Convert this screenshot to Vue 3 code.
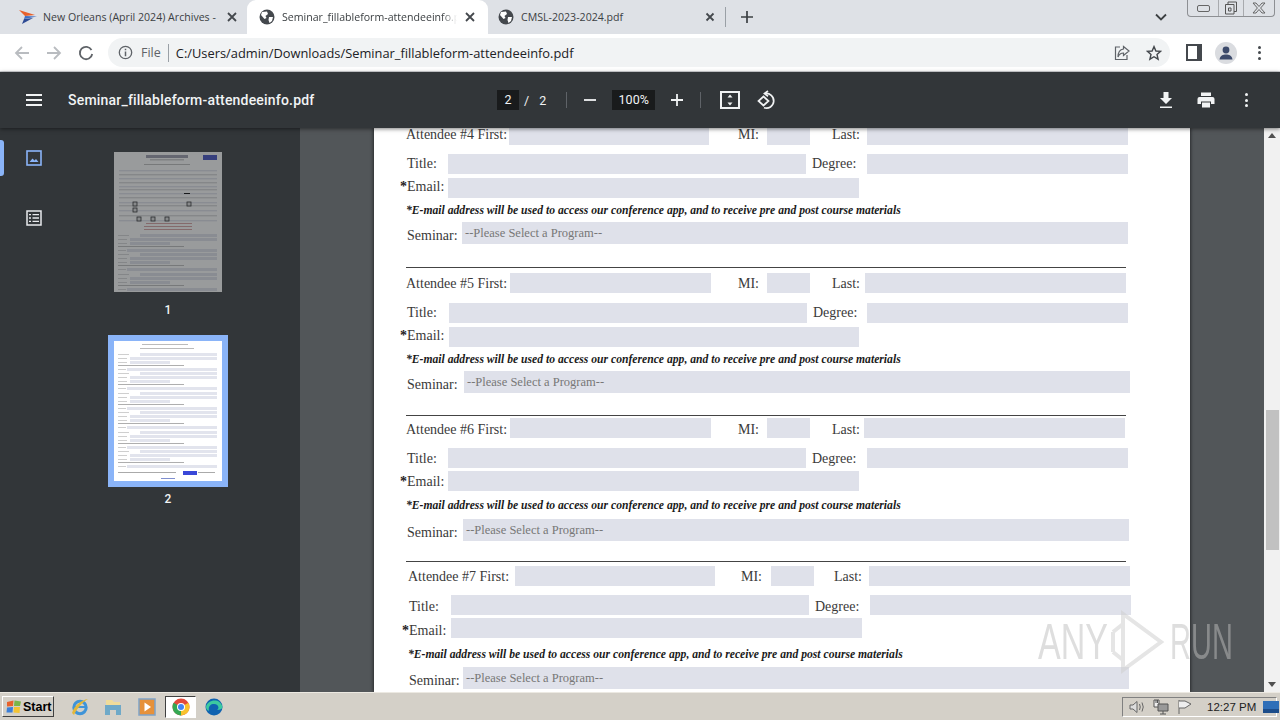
<template>
  <div class="screen">
    <div class="tabstrip">
      <div class="tab first">
        <svg class="fav" viewBox="0 0 18 16" width="18" height="16">
          <path d="M0 1 L16 6 L6 7 Z" fill="#e8612c" />
          <path d="M6 7 L18 7.5 L5 10 Z" fill="#3f6fc4" />
          <path d="M5 10 L14 9 L3 15 Z" fill="#2d4a94" />
        </svg>
        <span class="tab-title">New Orleans (April 2024) Archives -</span>
        <svg class="tab-x" viewBox="0 0 10 10" width="10" height="10"><path d="M1 1 L9 9 M9 1 L1 9" /></svg>
      </div>
      <div class="tab active">
        <svg class="fav globe" viewBox="0 0 16 16" width="16" height="16">
          <circle cx="8" cy="8" r="7.5" fill="#44484d" />
          <path d="M3 3 L8 2.5 L9 5 L6.5 7 L7.5 9 L5.5 10 L2 6 Z M10 8 L14 8 L13 12 L10.5 14 L9.5 11 Z" fill="#fff" />
        </svg>
        <span class="tab-title">Seminar_fillableform-attendeeinfo.pdf</span>
        <svg class="tab-x" viewBox="0 0 10 10" width="10" height="10"><path d="M1 1 L9 9 M9 1 L1 9" /></svg>
      </div>
      <div class="tab third">
        <svg class="fav globe" viewBox="0 0 16 16" width="16" height="16">
          <circle cx="8" cy="8" r="7.5" fill="#44484d" />
          <path d="M3 3 L8 2.5 L9 5 L6.5 7 L7.5 9 L5.5 10 L2 6 Z M10 8 L14 8 L13 12 L10.5 14 L9.5 11 Z" fill="#fff" />
        </svg>
        <span class="tab-title">CMSL-2023-2024.pdf</span>
        <svg class="tab-x" viewBox="0 0 10 10" width="10" height="10"><path d="M1.5 1.5 L8.5 8.5 M8.5 1.5 L1.5 8.5" /></svg>
      </div>
      <span class="tab-sep"></span>
      <svg class="plus" viewBox="0 0 14 14" width="14" height="14"><path d="M7 1 V13 M1 7 H13" /></svg>
      <svg class="chev" viewBox="0 0 12 8" width="12" height="8"><path d="M1 1.5 L6 6.5 L11 1.5" /></svg>
      <div class="winbtns">
        <span class="winbtn"><i class="win-min"></i></span>
        <span class="winbtn mid">
          <svg viewBox="0 0 14 14" width="14" height="14"><path d="M4 3.5 V1 H12.5 V10.5 H10 M1.5 3.5 H10 V13 H1.5 Z M4.5 7 H7 V10 H4.5 Z" fill="none" stroke="#555" /></svg>
        </span>
        <span class="winbtn">
          <svg viewBox="0 0 14 12" width="14" height="12"><path d="M1 1 H4 L7 4.5 L10 1 H13 L8.6 6 L13 11 H10 L7 7.5 L4 11 H1 L5.4 6 Z" fill="none" stroke="#666" /></svg>
        </span>
      </div>
    </div>

    <div class="toolbar">
      <svg class="nav-ic" viewBox="0 0 16 16" width="16" height="16"><path d="M15 8 H2 M8 2 L2 8 L8 14" stroke="#b9bcc0" /></svg>
      <svg class="nav-ic" viewBox="0 0 16 16" width="16" height="16"><path d="M1 8 H14 M8 2 L14 8 L8 14" stroke="#b9bcc0" /></svg>
      <svg class="nav-ic" viewBox="0 0 16 16" width="16" height="16"><path d="M13.5 5 A6.2 6.2 0 1 0 14.2 9" stroke="#5f6368" /><path d="M14.5 1.5 V6 H10 Z" fill="#5f6368" stroke="none" /></svg>
      <div class="omnibox">
        <svg class="info" viewBox="0 0 16 16" width="15" height="15">
          <circle cx="8" cy="8" r="6.6" fill="none" stroke="#5f6368" stroke-width="1.4" />
          <path d="M8 7 V12 M8 4 V5.6" stroke="#5f6368" stroke-width="1.6" />
        </svg>
        <span class="file-label">File</span>
        <span class="omni-sep"></span>
        <span class="url">C:/Users/admin/Downloads/Seminar_fillableform-attendeeinfo.pdf</span>
        <svg class="share" viewBox="0 0 16 16" width="16" height="16" fill="none" stroke="#5f6368" stroke-width="1.2">
          <path d="M6 2 H1.5 V14.5 H13 V10" />
          <path d="M9.5 1.5 L15 6 L9.5 10.5 V8 C6.5 8 5 9.5 4 12 C4 7.5 6 4.5 9.5 4 Z" />
        </svg>
        <svg class="star" viewBox="0 0 16 16" width="16" height="16">
          <path d="M8 1.6 L9.9 6 L14.6 6.4 L11 9.5 L12.1 14.2 L8 11.7 L3.9 14.2 L5 9.5 L1.4 6.4 L6.1 6 Z" fill="none" stroke="#44484d" stroke-width="1.4" />
        </svg>
      </div>
      <div class="side-ic"></div>
      <div class="avatar">
        <svg viewBox="0 0 22 22" width="22" height="22">
          <circle cx="11" cy="8" r="3.4" fill="#3c4a6b" />
          <path d="M4.5 17.5 C5 13.5 8 12.5 11 12.5 C14 12.5 17 13.5 17.5 17.5 Z" fill="#3c4a6b" />
        </svg>
      </div>
      <div class="chrome-dots"><i></i><i></i><i></i></div>
    </div>

    <div class="pdfbar">
      <div class="burger"><i></i><i></i><i></i></div>
      <span class="pdf-title">Seminar_fillableform-attendeeinfo.pdf</span>
      <span class="page-box">2</span>
      <span class="page-of">/</span>
      <span class="page-total">2</span>
      <span class="bar-sep sep-a"></span>
      <svg class="zoom-minus" viewBox="0 0 14 14" width="14" height="14"><path d="M1 7 H13" /></svg>
      <span class="zoom-box">100%</span>
      <svg class="zoom-plus" viewBox="0 0 14 14" width="14" height="14"><path d="M1 7 H13 M7 1 V13" /></svg>
      <span class="bar-sep sep-b"></span>
      <svg class="fit" viewBox="0 0 20 18" width="20" height="18" fill="none" stroke="#f1f3f4">
        <rect x="1" y="1" width="18" height="16" stroke-width="2" />
        <path d="M10 3.5 L12.5 6.5 H7.5 Z M10 14.5 L12.5 11.5 H7.5 Z" fill="#f1f3f4" stroke="none" />
      </svg>
      <svg class="rotate" viewBox="0 0 20 20" width="20" height="20" fill="none" stroke="#f1f3f4" stroke-width="1.7">
        <path d="M9 3.5 A7.4 7.4 0 1 1 8 17.8" />
        <path d="M12 1 L8.5 3.6 L12 6.2" />
        <path d="M7.5 6.5 L12.5 11 L7.5 15.5 L2.5 11 Z" />
      </svg>
      <svg class="download" viewBox="0 0 14 18" width="14" height="18">
        <path d="M4.5 1 H9.5 V7 H13 L7 13 L1 7 H4.5 Z M1 15.5 H13 V17 H1 Z" fill="#f1f3f4" />
      </svg>
      <svg class="print" viewBox="0 0 18 16" width="18" height="16">
        <path d="M4 0.5 H14 V4 H4 Z M2.5 5 H15.5 A2 2 0 0 1 17.5 7 V12 H14 V9.5 H4 V12 H0.5 V7 A2 2 0 0 1 2.5 5 Z M5 10.5 H13 V15.5 H5 Z" fill="#f1f3f4" />
      </svg>
      <div class="pdf-dots"><i></i><i></i><i></i></div>
    </div>

    <div class="workspace">
      <aside class="sidebar">
        <div class="side-tools">
          <div class="side-btn current">
            <svg viewBox="0 0 16 16" width="16" height="16">
              <rect x="1" y="1" width="14" height="14" fill="none" stroke="#8ab4f8" stroke-width="1.6" />
              <path d="M3.5 12 L6.5 8.5 L8.5 10.5 L10 9 L12.5 12 Z" fill="#8ab4f8" />
            </svg>
          </div>
          <div class="side-btn">
            <svg viewBox="0 0 16 16" width="16" height="16" fill="none" stroke="#e8eaed">
              <rect x="1" y="1" width="14" height="14" stroke-width="1.5" />
              <path d="M6.5 4.6 H13 M6.5 8 H13 M6.5 11.4 H13 M3 4.6 H5 M3 8 H5 M3 11.4 H5" stroke-width="1.3" />
            </svg>
          </div>
        </div>
        <div class="thumbs">
          <div class="thumb-frame">
            <svg class="thumb dim" viewBox="0 0 108 140" width="108" height="140">
              <rect width="108" height="140" fill="#fff" />
              <rect x="32" y="3" width="42" height="3" fill="#99a" />
              <rect x="36" y="7" width="34" height="1.5" fill="#ccc" />
              <rect x="89" y="3" width="14" height="5" fill="#3a48c0" />
              <rect x="30" y="12" width="46" height="1" fill="#bbb" />
              <rect v-for="r in coverBars" :key="r.key" :x="r.x" :y="r.y" :width="r.w" :height="r.h" :fill="r.fill" />
              <rect v-for="b in coverBoxes" :key="b[0] + '-' + b[1]" :x="b[0]" :y="b[1]" width="4" height="4" fill="#ddd" stroke="#222" stroke-width="0.8" />
            </svg>
          </div>
          <span class="thumb-num num-one">1</span>
          <div class="thumb-frame selected">
            <svg class="thumb" viewBox="0 0 108 140" width="108" height="140">
              <rect width="108" height="140" fill="#fff" />
              <rect x="28" y="3" width="46" height="1" fill="#bbb" />
              <rect x="26" y="7" width="54" height="1" fill="#bbb" />
              <rect v-for="r in listBars" :key="r.key" :x="r.x" :y="r.y" :width="r.w" :height="r.h" :fill="r.fill" />
              <rect x="4" y="131" width="58" height="1" fill="#aaa" />
              <rect x="69" y="130" width="14" height="4" fill="#3a48d8" />
              <rect x="84" y="131" width="17" height="1" fill="#aaa" />
              <rect x="47" y="137" width="14" height="1" fill="#7f8fd0" />
            </svg>
          </div>
          <span class="thumb-num num-two">2</span>
        </div>
      </aside>

      <main class="viewer">
        <article class="page">
          <section
            v-for="person in attendees"
            :key="person.no"
            class="attendee"
            :style="{ marginTop: person.top + 'px', marginLeft: person.dx + 'px' }"
          >
            <div class="row first-row" :style="{ marginTop: person.gaps[0] + 'px', '--shift': person.shift[0] + 'px' }">
              <span class="label" :style="{ width: person.firstLabel + 'px' }">Attendee #{{ person.no }} First:</span>
              <span class="field" :style="{ width: person.first + 'px' }"></span>
              <span class="label" :style="{ width: person.miLabel + 'px', marginLeft: person.miGap + 'px' }">MI:</span>
              <span class="field" :style="{ width: '43px' }"></span>
              <span class="label" :style="{ width: person.lastLabel + 'px', marginLeft: person.lastGap + 'px' }">Last:</span>
              <span class="field" :style="{ width: person.last + 'px' }"></span>
            </div>
            <div class="row" :style="{ marginTop: person.gaps[1] + 'px', '--shift': person.shift[1] + 'px' }">
              <span class="label inset" :style="{ width: person.titleLabel + 'px' }">Title:</span>
              <span class="field" :style="{ width: '358px' }"></span>
              <span class="label degree" :style="{ width: person.degree + 'px' }">Degree:</span>
              <span class="field" :style="{ width: '261px' }"></span>
            </div>
            <div class="row" :style="{ marginTop: person.gaps[2] + 'px', '--shift': person.shift[2] + 'px' }">
              <span class="label email" :style="{ width: person.titleLabel + 'px' }"><b class="req">*</b>Email:</span>
              <span class="field" :style="{ width: person.emailField + 'px' }"></span>
            </div>
            <p class="note" :style="{ marginTop: person.gaps[3] + 'px' }">*E-mail address will be used to access our conference app, and to receive pre and post course materials</p>
            <div class="row seminar" :style="{ marginTop: person.gaps[4] + 'px', '--shift': '3px' }">
              <span class="label inset" :style="{ width: person.semLabel + 'px' }">Seminar:</span>
              <span class="field select" :style="{ width: '666px' }">--Please Select a Program--</span>
            </div>
            <hr v-if="person.rule" class="rule" :style="{ marginTop: person.rule + 'px' }" />
          </section>
        </article>
      </main>

      <div class="scrollbar">
        <span class="arrow up"></span>
        <span class="thumb-bar"></span>
        <span class="arrow down"></span>
      </div>

      <div class="watermark">
        <span class="wm-any">ANY</span>
        <svg viewBox="0 0 56 64" width="56" height="64" fill="none" stroke="#d0d0d0" stroke-width="4" opacity="0.55">
          <path d="M4 22 V42 M14 4 V60 L52 32 Z" />
          <path d="M4 22 L14 14 M4 42 L14 50" />
        </svg>
        <span class="wm-run">RUN</span>
      </div>
    </div>

    <footer class="taskbar">
      <div class="start">
        <svg viewBox="0 0 16 16" width="16" height="16">
          <path d="M1 3 L7.5 1.5 L7 7 L1 7.6 Z" fill="#e8622c" />
          <path d="M8.5 1.5 L15 2.5 L14 7 L8 7 Z" fill="#7ab648" />
          <path d="M1 8.6 L7 8 L6.5 13.5 L0.5 13.5 Z" fill="#3c7fd8" />
          <path d="M8 8 L14 8 L13.5 14 L7.5 13.5 Z" fill="#f3c331" />
        </svg>
        <span>Start</span>
      </div>
      <div class="quick">
        <svg class="q-ie" viewBox="0 0 20 20" width="20" height="20">
          <circle cx="10" cy="10.5" r="6.2" fill="none" stroke="#3f94d8" stroke-width="3" />
          <path d="M5 10 H16" stroke="#3f94d8" stroke-width="2" />
          <path d="M2 16 C4 9 11 3 18 2 C13 5 7 11 4 18 Z" fill="#e3b83a" />
        </svg>
        <svg class="q-folder" viewBox="0 0 20 20" width="20" height="20">
          <path d="M3 3 H9 L11 5 H17 V9 H3 Z" fill="#f0dc9a" />
          <path d="M2 8 H18 V18 H13 V13 H7 V18 H2 Z" fill="#6fa9c8" />
        </svg>
        <svg class="q-media" viewBox="0 0 18 18" width="18" height="18">
          <rect x="1" y="1" width="16" height="16" fill="#e6913a" stroke="#7ea2c8" stroke-width="1.5" />
          <path d="M6.5 4.5 L13 9 L6.5 13.5 Z" fill="#fff" />
        </svg>
        <div class="q-chrome">
          <svg viewBox="0 0 18 18" width="18" height="18">
            <circle cx="9" cy="9" r="8.5" fill="#e24a3b" />
            <path d="M9 9 L16.4 4.8 A8.5 8.5 0 0 1 9 17.5 Z" fill="#f8c22d" />
            <path d="M9 9 L9 17.5 A8.5 8.5 0 0 1 1.6 4.8 Z" fill="#34a853" />
            <circle cx="9" cy="9" r="4" fill="#fff" />
            <circle cx="9" cy="9" r="3" fill="#4285f4" />
          </svg>
        </div>
        <svg class="q-edge" viewBox="0 0 18 18" width="18" height="18">
          <circle cx="9" cy="9" r="8.5" fill="#0f62b0" />
          <path d="M1 9 C2 2 15 -1 17.5 9 C17.5 11 15 12 12 12 C15 10 13 6 9 6 C5 6 3 9 4 13 C2 12 1 11 1 9 Z" fill="#3cc9a0" />
        </svg>
      </div>
      <div class="tray">
        <svg viewBox="0 0 18 16" width="18" height="16" fill="none" stroke="#666">
          <path d="M2 6 H5 L9 2.5 V13.5 L5 10 H2 Z" fill="#ddd" />
          <path d="M11.5 5 Q13 8 11.5 11 M14 3.5 Q16.5 8 14 12.5" />
        </svg>
        <svg viewBox="0 0 18 16" width="18" height="16" fill="none" stroke="#555">
          <path d="M2 1 H7 V8 H2 Z M4 1 V4 M5.5 1 V4" fill="#eee" />
          <path d="M6 5 H16 V12 H6 Z M8 15 H14 M11 12 V15" fill="#999" />
        </svg>
        <svg viewBox="0 0 18 16" width="18" height="16" fill="none" stroke="#666">
          <path d="M3 1 V15" />
          <path d="M3 2 H9 L15 5 L9 9 H3" fill="#eee" />
        </svg>
        <span class="clock">12:27 PM</span>
        <svg class="desk" viewBox="0 0 16 12" width="16" height="12">
          <rect width="16" height="12" fill="#2f6fb8" />
          <rect y="8" width="16" height="4" fill="#1d4d8a" />
        </svg>
      </div>
    </footer>
  </div>
</template>

<script setup>
const attendees = [
  { no: 4, top: -3, dx: 0, firstLabel: 103, first: 200, miLabel: 29, miGap: 29, lastLabel: 35, lastGap: 22, last: 261, titleLabel: 42, degree: 61, emailField: 411, semLabel: 56, shift: [0, 0, -1], gaps: [0, 9, 4, 6, 4], rule: 23 },
  { no: 5, top: 0, dx: 0, firstLabel: 104, first: 201, miLabel: 29, miGap: 27, lastLabel: 33, lastGap: 22, last: 261, titleLabel: 43, degree: 60, emailField: 410, semLabel: 58, shift: [1, 0, -1], gaps: [5, 10, 4, 6, 4], rule: 22 },
  { no: 6, top: 0, dx: 0, firstLabel: 104, first: 201, miLabel: 29, miGap: 27, lastLabel: 32, lastGap: 22, last: 261, titleLabel: 42, degree: 61, emailField: 411, semLabel: 57, shift: [2, 1, 1], gaps: [2, 10, 3, 8, 6], rule: 20 },
  { no: 7, top: 0, dx: 2, firstLabel: 107, first: 200, miLabel: 30, miGap: 26, lastLabel: 35, lastGap: 20, last: 261, titleLabel: 43, degree: 61, emailField: 411, semLabel: 55, shift: [1, 2, 3], gaps: [4, 9, 3, 10, 5], rule: 0 }
]

// bars for the two page previews in the sidebar
const makeGroups = (starts, fieldColor, textColor, noteColor) => {
  const bars = []
  starts.forEach((y, i) => {
    const rows = [
      [y, 4, 11, 26, 47],
      [y + 4, 4, 9, 16, 55],
      [y + 8, 4, 9, 16, 40]
    ]
    rows.forEach(([ry, lx, lw, fx, fw], j) => {
      bars.push({ key: `${i}-${j}-l`, x: lx, y: ry + 1, w: lw, h: 0.8, fill: textColor })
      bars.push({ key: `${i}-${j}-f`, x: fx, y: ry, w: fw, h: 3, fill: fieldColor })
    })
    bars.push({ key: `${i}-m`, x: 57, y, w: 7, h: 3, fill: fieldColor })
    bars.push({ key: `${i}-r`, x: 66, y, w: 37, h: 3, fill: fieldColor })
    bars.push({ key: `${i}-r2`, x: 66, y: y + 4, w: 37, h: 3, fill: fieldColor })
    bars.push({ key: `${i}-n`, x: 4, y: y + 12, w: 66, h: 0.8, fill: noteColor })
    bars.push({ key: `${i}-sl`, x: 4, y: y + 16, w: 8, h: 0.8, fill: textColor })
    bars.push({ key: `${i}-s`, x: 13, y: y + 15, w: 90, h: 3, fill: fieldColor })
  })
  return bars
}

const listBars = makeGroups([12, 31, 51, 70, 90, 109], '#e2e4ed', '#c4c4c4', '#9a9a9a')

const coverBars = [
  ...makeGroups([82, 101, 121], '#e0e2ea', '#ccc', '#aaa'),
  ...[18, 22, 26, 30, 34, 37, 41, 45, 50, 53, 58, 63, 68].map((y, i) => ({
    key: `c${i}`,
    x: 5,
    y,
    w: 98,
    h: 1.4,
    fill: i % 2 ? '#d8d8d8' : '#e0e2ea'
  })),
  { key: 'red1', x: 32, y: 71, w: 46, h: 0.8, fill: '#c88' },
  { key: 'red2', x: 30, y: 74, w: 48, h: 0.8, fill: '#c88' },
  { key: 'red3', x: 30, y: 77, w: 48, h: 0.8, fill: '#c88' },
  { key: 'blk', x: 70, y: 41, w: 6, h: 1, fill: '#000' }
]

const coverBoxes = [
  [19, 50],
  [73, 50],
  [19, 56],
  [23, 65],
  [37, 65],
  [51, 65]
]
</script>

<style scoped>
.screen {
  display: flex;
  flex-direction: column;
  width: 1280px;
  height: 720px;
  overflow: hidden;
  font-family: "Open Sans", "Liberation Sans", sans-serif;
  position: relative;
}

.tabstrip {
  display: flex;
  align-items: center;
  height: 34px;
  padding-left: 8px;
  background: #dee1e6;
  position: relative;
}

.tab {
  display: flex;
  align-items: center;
  flex: none;
  height: 34px;
  box-sizing: border-box;
  font-size: 10.6px;
  color: #3c4043;
}

.tab.first {
  width: 239px;
  padding-left: 11px;
}

.tab.active {
  width: 241px;
  padding-left: 12px;
  background: #fff;
  border-radius: 9px 9px 0 0;
}

.tab.third {
  width: 237px;
  padding-left: 10px;
}

.fav {
  flex: none;
  margin-right: 6px;
}

.globe {
  margin-right: 7px;
}

.tab-title {
  flex: none;
  white-space: nowrap;
  overflow: hidden;
}

.first .tab-title {
  width: 178px;
}

.active .tab-title {
  width: 175px;
  -webkit-mask-image: linear-gradient(to right, #000 160px, transparent 175px);
  mask-image: linear-gradient(to right, #000 160px, transparent 175px);
}

.third .tab-title {
  width: 182px;
}

.tab-x {
  flex: none;
  margin-left: 2px;
}

.first .tab-x {
  margin-left: 6px;
}

.active .tab-x {
  margin-left: 8px;
}

.tab-x path {
  fill: none;
  stroke: #44484d;
  stroke-width: 1.8;
}

.tab-sep {
  width: 1px;
  height: 20px;
  background: #9aa0a6;
}

.plus {
  margin-left: 14px;
}

.plus path {
  fill: none;
  stroke: #3c4043;
  stroke-width: 1.7;
}

.chev {
  margin-left: 401px;
}

.chev path {
  fill: none;
  stroke: #3c4043;
  stroke-width: 1.8;
}

.winbtns {
  display: flex;
  height: 16px;
  position: absolute;
  top: 0;
  right: 5px;
  border: 1px solid #8d8f93;
  border-top: 0;
  border-radius: 0 0 4px 4px;
}

.winbtn {
  display: flex;
  align-items: center;
  justify-content: center;
  width: 30px;
}

.winbtn.mid {
  width: 24px;
  border-left: 1px solid #a8aaae;
  border-right: 1px solid #a8aaae;
}

.win-min {
  display: block;
  width: 11px;
  height: 5px;
  border: 1px solid #666;
  border-radius: 2px;
}

.toolbar {
  display: flex;
  align-items: center;
  height: 38px;
  padding-left: 14px;
  background: #fff;
  border-bottom: 1px solid #d5d7da;
  box-sizing: border-box;
}

.nav-ic {
  flex: none;
  margin-right: 16px;
}

.nav-ic path {
  fill: none;
  stroke-width: 1.8;
}

.omnibox {
  display: flex;
  align-items: center;
  flex: none;
  width: 1062px;
  height: 29px;
  margin-left: -2px;
  padding-left: 10px;
  box-sizing: border-box;
  background: #f1f3f4;
  border-radius: 15px;
}

.file-label {
  margin-left: 8px;
  font-size: 12.5px;
  color: #5f6368;
}

.omni-sep {
  width: 1px;
  height: 18px;
  margin: 0 7px;
  background: #9aa0a6;
}

.url {
  flex: none;
  width: 938px;
  font-size: 12.85px;
  color: #202124;
  white-space: nowrap;
}

.share {
  flex: none;
}

.star {
  margin-left: 16px;
  flex: none;
}

.side-ic {
  flex: none;
  width: 9px;
  height: 13px;
  margin-left: 16px;
  border: 2px solid #44484d;
  border-right-width: 5px;
}

.avatar {
  display: flex;
  align-items: center;
  justify-content: center;
  flex: none;
  width: 22px;
  height: 22px;
  margin-left: 13px;
  background: #dadce0;
  border-radius: 50%;
}

.chrome-dots,
.pdf-dots {
  display: flex;
  flex-direction: column;
  gap: 2.5px;
  flex: none;
}

.chrome-dots {
  margin-left: 21px;
}

.chrome-dots i,
.pdf-dots i {
  display: block;
  width: 3px;
  height: 3px;
  border-radius: 50%;
  background: #44484d;
}

.pdfbar {
  display: flex;
  align-items: center;
  height: 56px;
  padding-left: 26px;
  background: #323639;
  color: #f1f3f4;
  box-shadow: 0 1px 4px rgba(0, 0, 0, 0.5);
  position: relative;
  z-index: 2;
}

.burger {
  display: flex;
  flex-direction: column;
  gap: 3px;
  width: 16px;
  flex: none;
}

.burger i {
  display: block;
  height: 2px;
  background: #f1f3f4;
}

.pdf-title {
  width: 429px;
  margin-left: 26px;
  font-family: Roboto, "Noto Sans", sans-serif;
  font-size: 14px;
  font-weight: 500;
  letter-spacing: 0.2px;
  white-space: nowrap;
}

.page-box {
  width: 22px;
  height: 20px;
  background: #191b1c;
  font: 12.5px/20px Roboto, sans-serif;
  text-align: center;
}

.page-of {
  margin-left: 5px;
  font: 12.5px Roboto, sans-serif;
}

.page-total {
  margin-left: 10px;
  font: 12.5px Roboto, sans-serif;
}

.bar-sep {
  width: 1px;
  height: 16px;
  background: #5f6368;
}

.sep-a {
  margin-left: 20px;
}

.zoom-minus {
  margin-left: 16px;
}

.zoom-minus path,
.zoom-plus path {
  fill: none;
  stroke: #f1f3f4;
  stroke-width: 1.8;
}

.zoom-box {
  width: 43px;
  height: 20px;
  margin-left: 15px;
  background: #191b1c;
  font: 12.5px/20px Roboto, sans-serif;
  text-align: center;
}

.zoom-plus {
  margin-left: 15px;
}

.sep-b {
  margin-left: 16px;
}

.fit {
  margin-left: 19px;
}

.rotate {
  margin-left: 16px;
}

.download {
  margin-left: 383px;
}

.print {
  margin-left: 24px;
}

.pdf-dots {
  margin-left: 30px;
}

.pdf-dots i {
  background: #f1f3f4;
}

.workspace {
  display: flex;
  height: 564px;
  position: relative;
}

.sidebar {
  display: flex;
  flex: none;
  width: 300px;
  background: #323639;
}

.side-tools {
  display: flex;
  flex-direction: column;
  gap: 24px;
  width: 68px;
  padding-top: 12px;
}

.side-btn {
  display: flex;
  align-items: center;
  justify-content: center;
  height: 36px;
  position: relative;
}

.side-btn.current::before {
  content: "";
  position: absolute;
  left: 0;
  top: 0;
  width: 4px;
  height: 36px;
  background: #8ab4f8;
  border-radius: 0 3px 3px 0;
}

.thumbs {
  display: flex;
  flex-direction: column;
  align-items: center;
  width: 200px;
  padding-top: 24px;
}

.thumb-frame {
  display: flex;
  line-height: 0;
}

.thumb-frame.selected {
  border: 6px solid #8ab4f8;
}

.thumb {
  filter: blur(0.3px);
}

.thumb.dim {
  opacity: 0.5;
}

.thumb-num {
  height: 15px;
  font: 500 12px/15px Roboto, sans-serif;
  color: #f1f3f4;
}

.num-one {
  margin: 11px 0 17px;
}

.num-two {
  margin-top: 5px;
}

.viewer {
  display: flex;
  justify-content: center;
  width: 964px;
  height: 564px;
  overflow: hidden;
  background: #525659;
}

.page {
  width: 816px;
  height: 564px;
  padding-left: 32px;
  box-sizing: border-box;
  overflow: hidden;
  background: #fff;
  font-family: "Liberation Serif", "Times New Roman", serif;
  color: #3a3a3a;
  box-shadow: -1px 0 3px rgba(0, 0, 0, 0.4), 1px 0 3px rgba(0, 0, 0, 0.4);
}

.row {
  display: flex;
  align-items: center;
  height: 20px;
  font-size: 14px;
}

.label {
  flex: none;
  box-sizing: border-box;
  white-space: nowrap;
  position: relative;
  top: var(--shift, 0);
}

.inset {
  padding-left: 1px;
}

.degree {
  padding-left: 6px;
}

.email {
  box-sizing: content-box;
  margin-left: -6px;
  padding-right: 6px;
}

.req {
  font-weight: 700;
  color: #222;
}

.field {
  flex: none;
  display: block;
  height: 100%;
  background: #dfe1ea;
}

.note {
  height: 14px;
  margin: 0;
  font-size: 11.65px;
  line-height: 14px;
  font-weight: 700;
  font-style: italic;
  color: #1a1a1a;
  white-space: nowrap;
}

.seminar {
  height: 22px;
}

.select {
  padding-left: 3px;
  box-sizing: border-box;
  font-size: 12.5px;
  line-height: 22px;
  color: #777;
}

.rule {
  width: 720px;
  height: 1px;
  margin: 0;
  border: 0;
  background: #444;
}

.scrollbar {
  flex: none;
  width: 16px;
  height: 564px;
  background: #f1f1f1;
  position: relative;
}

.thumb-bar {
  position: absolute;
  left: 2px;
  top: 282px;
  width: 13px;
  height: 140px;
  background: #c1c1c1;
}

.arrow {
  position: absolute;
  left: 4px;
  width: 0;
  height: 0;
  border-left: 4px solid transparent;
  border-right: 4px solid transparent;
}

.arrow.up {
  top: 5px;
  border-bottom: 5px solid #505050;
}

.arrow.down {
  bottom: 5px;
  border-top: 5px solid #505050;
}

.watermark {
  display: flex;
  align-items: center;
  gap: 5px;
  position: absolute;
  left: 1038px;
  top: 482px;
  font-family: "Liberation Sans", sans-serif;
  font-size: 50px;
  line-height: 64px;
  color: rgba(190, 190, 190, 0.5);
  pointer-events: none;
}

.watermark span {
  display: block;
  transform-origin: left center;
}

.wm-any {
  width: 66px;
  transform: scaleX(0.68);
}

.wm-run {
  width: 58px;
  transform: scaleX(0.58);
}

.taskbar {
  display: flex;
  align-items: center;
  height: 28px;
  box-sizing: border-box;
  padding-left: 2px;
  background: #d4d0c8;
  border-top: 1px solid #ece9e2;
  position: relative;
  z-index: 3;
}

.start {
  display: flex;
  align-items: center;
  gap: 1px;
  width: 52px;
  height: 21px;
  box-sizing: border-box;
  padding-left: 3px;
  background: #d4d0c8;
  border: 1px solid;
  border-color: #fff #404040 #404040 #fff;
  font: 700 12.5px "Liberation Sans", sans-serif;
  color: #000;
}

.quick {
  display: flex;
  align-items: center;
  margin-left: 16px;
}

.q-folder {
  margin-left: 13px;
}

.q-media {
  margin-left: 15px;
}

.q-chrome {
  display: flex;
  align-items: center;
  justify-content: center;
  width: 31px;
  height: 22px;
  box-sizing: border-box;
  margin-left: 9px;
  background: #fff;
  border: 1px solid;
  border-color: #404040 #fff #fff #404040;
}

.q-edge {
  margin-left: 9px;
}

.tray {
  display: flex;
  align-items: center;
  gap: 6px;
  height: 20px;
  width: 155px;
  box-sizing: border-box;
  margin-left: auto;
  margin-right: 3px;
  padding-left: 5px;
  border: 1px solid;
  border-color: #808080 #fff #fff #808080;
  font: 11.5px "Liberation Sans", sans-serif;
  color: #222;
}

.tray svg {
  flex: none;
}

.clock {
  margin-left: 7px;
  white-space: nowrap;
}

.desk {
  margin-left: 1px;
}
</style>

<style>
html,
body {
  margin: 0;
  background: #d4d0c8;
}
</style>
